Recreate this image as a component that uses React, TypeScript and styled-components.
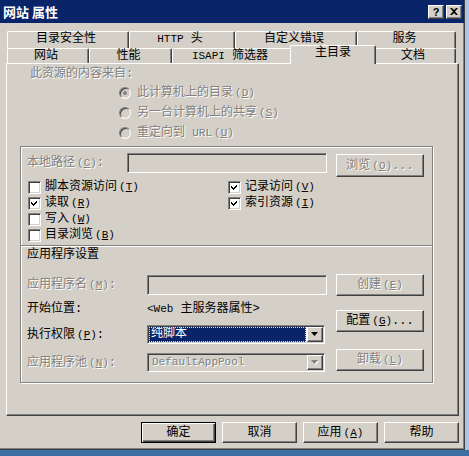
import React from 'react';
import styled, { createGlobalStyle, css } from 'styled-components';

const face = '#d4d0c8';

const GlobalStyle = createGlobalStyle`
  html, body {
    margin: 0;
    padding: 0;
    background: #3a6ea5;
  }
  body {
    font-family: "Liberation Mono", "Noto Sans CJK SC", monospace;
    font-size: 12px;
    line-height: 16px;
    color: #000;
  }
`;

const raised = css`
  border: 1px solid;
  border-color: #fff #404040 #404040 #fff;
  box-shadow: inset -1px -1px #808080, inset 1px 1px ${face};
`;

const sunken = css`
  border: 1px solid;
  border-color: #808080 #fff #fff #808080;
  box-shadow: inset 1px 1px #404040, inset -1px -1px ${face};
`;

const Desktop = styled.div`
  display: flex;
  align-items: flex-start;
  width: 469px;
  height: 456px;
  overflow: hidden;
`;

const Strip = styled.div`
  width: 4px;
  height: 450px;
  background: #a9c6ea;
`;

const Window = styled.div`
  width: 465px;
  height: 450px;
  box-sizing: border-box;
  background: ${face};
  border-right: 1px solid #404040;
  border-bottom: 1px solid #404040;
  box-shadow: inset -1px -1px #808080;
  display: flex;
  flex-direction: column;
`;

const TitleBar = styled.div`
  height: 23px;
  background: #0a246a;
  display: flex;
  align-items: center;
  padding: 0 2px 0 3px;
`;

const TitleText = styled.div`
  flex: 1;
  color: #fff;
  font-family: "Noto Sans CJK SC", sans-serif;
  font-weight: bold;
  font-size: 13px;
`;

const CapButtons = styled.div`
  display: flex;
  gap: 2px;
`;

const CapButton = styled.div`
  width: 16px;
  height: 14px;
  box-sizing: border-box;
  background: ${face};
  ${raised}
  display: flex;
  align-items: center;
  justify-content: center;
  font-family: "Liberation Sans", sans-serif;
  font-weight: bold;
  font-size: 11px;
  line-height: 12px;
`;

const Body = styled.div`
  padding: 8px 5px 0 6px;
  display: flex;
  flex-direction: column;
`;

const Tabs = styled.div`
  margin-left: 1px;
`;

const TabRow = styled.div<{ $h: number }>`
  display: flex;
  align-items: flex-end;
  height: ${p => p.$h}px;
`;

const Tab = styled.div<{ $w: number; $active?: boolean }>`
  width: ${p => p.$w}px;
  height: 100%;
  box-sizing: border-box;
  border-top: 1px solid #fff;
  border-left: 1px solid #fff;
  border-right: 1px solid #404040;
  box-shadow: inset -1px 0 #808080;
  border-radius: 2px 2px 0 0;
  background: ${face};
  text-align: center;
  padding-right: 4px;
  line-height: 15px;
  white-space: nowrap;
  ${p =>
    p.$active &&
    css`
      width: ${p.$w + 4}px;
      height: 19px;
      margin: 0 -2px -1px;
      padding-right: 0;
      position: relative;
      z-index: 2;
      line-height: 14px;
    `}
`;

const Panel = styled.div`
  position: relative;
  z-index: 1;
  height: 353px;
  box-sizing: border-box;
  border: 1px solid;
  border-color: #fff #404040 #404040 #fff;
  box-shadow: inset -1px -1px #808080;
  padding-top: 2px;
`;

const Dim = styled.span`
  color: #808080;
  text-shadow: 1px 1px 0 #fff;
`;

const Lat = styled.span`
  font-family: "Liberation Mono", monospace;
  font-size: 11px;
`;

const Key = styled.span`
  font-size: 11px;
  margin-left: 2px;
`;

const SourceLabel = styled.div`
  padding-left: 23px;
`;

const RadioGroup = styled.div`
  margin-top: 3px;
  padding-left: 112px;
  display: flex;
  flex-direction: column;
  gap: 4px;
`;

const RadioRow = styled.div`
  display: flex;
  align-items: center;
  height: 16px;
  gap: 6px;
`;

const RadioCircle = styled.div<{ $on?: boolean }>`
  width: 12px;
  height: 12px;
  box-sizing: border-box;
  border-radius: 50%;
  border: 1px solid;
  border-color: #808080 #fff #fff #808080;
  box-shadow: inset 1px 1px #404040;
  background: ${face};
  display: flex;
  align-items: center;
  justify-content: center;
  &::after {
    content: '';
    display: ${p => (p.$on ? 'block' : 'none')};
    width: 4px;
    height: 4px;
    border-radius: 50%;
    background: #808080;
  }
`;

const GroupBox = styled.div`
  margin: 5px 0 0 13px;
  width: 413px;
  height: 237px;
  box-sizing: border-box;
  border: 1px solid #808080;
  box-shadow: inset 1px 1px #fff, 1px 1px #fff;
`;

const PathRow = styled.div`
  display: flex;
  align-items: flex-start;
  padding: 6px 0 0 6px;
`;

const FieldLabel = styled.div<{ $w: number }>`
  width: ${p => p.$w}px;
  line-height: 20px;
  white-space: nowrap;
`;

const TextBox = styled.div<{ $w: number; $disabled?: boolean }>`
  width: ${p => p.$w}px;
  height: 20px;
  box-sizing: border-box;
  ${sunken}
  background: ${p => (p.$disabled ? face : '#fff')};
`;

const Button = styled.button<{ $w: number; $h: number; $default?: boolean }>`
  width: ${p => p.$w}px;
  height: ${p => p.$h}px;
  box-sizing: border-box;
  margin: 0;
  padding: 0;
  background: ${face};
  font: inherit;
  line-height: 16px;
  color: #000;
  display: flex;
  align-items: center;
  justify-content: center;
  white-space: nowrap;
  ${raised}
  ${p =>
    p.$default &&
    css`
      border-color: #000;
      box-shadow: inset 1px 1px #fff, inset -1px -1px #404040, inset -2px -2px #808080;
    `}
`;

const BrowseButton = styled(Button)`
  margin: 1px 0 0 9px;
`;

const CheckGrid = styled.div`
  display: grid;
  grid-template-columns: 200px 200px;
  grid-auto-rows: 16px;
  margin: 2px 0 0 7px;
`;

const CheckItem = styled.div`
  display: flex;
  align-items: center;
  gap: 4px;
`;

const CheckBox = styled.div`
  width: 13px;
  height: 13px;
  box-sizing: border-box;
  ${sunken}
  background: #fff;
  display: flex;
`;

const Separator = styled.div`
  margin-top: 2px;
  border-top: 1px solid #808080;
  border-bottom: 1px solid #fff;
`;

const SectionHead = styled.div`
  padding-left: 6px;
`;

const AppBody = styled.div`
  display: flex;
  margin-top: 11px;
  padding-left: 6px;
`;

const LeftCol = styled.div`
  width: 309px;
  padding-top: 1px;
  display: flex;
  flex-direction: column;
`;

const AppRow = styled.div<{ $h: number; $mt: number }>`
  display: flex;
  align-items: center;
  height: ${p => p.$h}px;
  margin-top: ${p => p.$mt}px;
  white-space: nowrap;
`;

const RowLabel = styled.div`
  width: 120px;
`;

const RightCol = styled.div`
  display: flex;
  flex-direction: column;
`;

const SideButton = styled(Button)<{ $mt: number }>`
  margin-top: ${p => p.$mt}px;
`;

const Combo = styled.div<{ $w: number; $disabled?: boolean }>`
  width: ${p => p.$w}px;
  height: 19px;
  box-sizing: border-box;
  ${sunken}
  padding: 1px;
  display: flex;
  background: ${p => (p.$disabled ? face : '#fff')};
`;

const ComboField = styled.div`
  flex: 1;
  display: flex;
  padding-right: 1px;
  line-height: 15px;
  overflow: hidden;
`;

const Selection = styled.div`
  flex: 1;
  background: #0a246a;
  color: #fff;
  outline: 1px dotted #e8e890;
  outline-offset: -1px;
  padding-left: 2px;
`;

const ComboText = styled.div`
  padding-left: 3px;
`;

const ArrowButton = styled.div`
  width: 16px;
  height: 15px;
  box-sizing: border-box;
  ${raised}
  background: ${face};
  display: flex;
  align-items: center;
  justify-content: center;
`;

const Footer = styled.div`
  display: flex;
  justify-content: flex-end;
  gap: 6px;
  margin-top: 6px;
`;

const Mn = ({ c }: { c: string }) => (
  <Key>
    (<u>{c}</u>)
  </Key>
);

const Check = () => (
  <svg width="11" height="11" viewBox="0 0 11 11">
    <polygon points="2,4 4,6 8,2 8,4 4,8 2,6" fill="#000" shapeRendering="crispEdges" />
  </svg>
);

const Arrow = ({ disabled }: { disabled?: boolean }) => (
  <svg width="8" height="5" viewBox="0 0 8 5">
    {disabled && <polygon points="1,1 8,1 4.5,5" fill="#fff" />}
    <polygon points="0,0 7,0 3.5,4" fill={disabled ? '#808080' : '#000'} />
  </svg>
);

const checks: { label: string; key: string; on: boolean }[] = [
  { label: '脚本资源访问', key: 'T', on: false },
  { label: '记录访问', key: 'V', on: true },
  { label: '读取', key: 'R', on: true },
  { label: '索引资源', key: 'I', on: true },
  { label: '写入', key: 'W', on: false },
  { label: '', key: '', on: false },
  { label: '目录浏览', key: 'B', on: false },
];

const App = () => {
  return (
    <Desktop>
      <GlobalStyle />
      <Window>
        <TitleBar>
          <TitleText>网站 属性</TitleText>
          <CapButtons>
            <CapButton>?</CapButton>
            <CapButton>
              <svg width="8" height="7" viewBox="0 0 8 7">
                <path d="M0 0h2l2 2 2-2h2L5 3.5 8 7H6L4 5 2 7H0l3-3.5z" fill="#000" />
              </svg>
            </CapButton>
          </CapButtons>
        </TitleBar>

        <Body>
          <Tabs>
            <TabRow $h={17}>
              <Tab $w={122}>目录安全性</Tab>
              <Tab $w={106}>
                <Lat>HTTP</Lat> 头
              </Tab>
              <Tab $w={122}>自定义错误</Tab>
              <Tab $w={99}>服务</Tab>
            </TabRow>
            <TabRow $h={15}>
              <Tab $w={82}>网站</Tab>
              <Tab $w={83}>性能</Tab>
              <Tab $w={120}>
                <Lat>ISAPI</Lat> 筛选器
              </Tab>
              <Tab $w={82} $active>
                主目录
              </Tab>
              <Tab $w={82}>文档</Tab>
            </TabRow>
          </Tabs>

          <Panel>
            <SourceLabel>
              <Dim>此资源的内容来自:</Dim>
            </SourceLabel>
            <RadioGroup>
              <RadioRow>
                <RadioCircle $on />
                <Dim>
                  此计算机上的目录<Mn c="D" />
                </Dim>
              </RadioRow>
              <RadioRow>
                <RadioCircle />
                <Dim>
                  另一台计算机上的共享<Mn c="S" />
                </Dim>
              </RadioRow>
              <RadioRow>
                <RadioCircle />
                <Dim>
                  重定向到 <Lat>URL</Lat>
                  <Mn c="U" />
                </Dim>
              </RadioRow>
            </RadioGroup>

            <GroupBox>
              <PathRow>
                <FieldLabel $w={100}>
                  <Dim>
                    本地路径<Mn c="C" />:
                  </Dim>
                </FieldLabel>
                <TextBox $w={200} $disabled />
                <BrowseButton $w={88} $h={23}>
                  <Dim>
                    浏览<Mn c="O" />...
                  </Dim>
                </BrowseButton>
              </PathRow>

              <CheckGrid>
                {checks.map((c, i) =>
                  c.label ? (
                    <CheckItem key={i}>
                      <CheckBox>{c.on && <Check />}</CheckBox>
                      <span>
                        {c.label}
                        <Mn c={c.key} />
                      </span>
                    </CheckItem>
                  ) : (
                    <div key={i} />
                  )
                )}
              </CheckGrid>

              <Separator />
              <SectionHead>应用程序设置</SectionHead>

              <AppBody>
                <LeftCol>
                  <AppRow $h={20} $mt={0}>
                    <RowLabel>
                      <Dim>
                        应用程序名<Mn c="M" />:
                      </Dim>
                    </RowLabel>
                    <TextBox $w={180} $disabled />
                  </AppRow>
                  <AppRow $h={16} $mt={6}>
                    <RowLabel>开始位置:</RowLabel>
                    <span>
                      <Lat>&lt;Web</Lat> 主服务器属性&gt;
                    </span>
                  </AppRow>
                  <AppRow $h={19} $mt={8}>
                    <RowLabel>
                      执行权限<Mn c="P" />:
                    </RowLabel>
                    <Combo $w={178}>
                      <ComboField>
                        <Selection>纯脚本</Selection>
                      </ComboField>
                      <ArrowButton>
                        <Arrow />
                      </ArrowButton>
                    </Combo>
                  </AppRow>
                  <AppRow $h={19} $mt={9}>
                    <RowLabel>
                      <Dim>
                        应用程序池<Mn c="N" />:
                      </Dim>
                    </RowLabel>
                    <Combo $w={178} $disabled>
                      <ComboField>
                        <ComboText>
                          <Dim>
                            <Lat>DefaultAppPool</Lat>
                          </Dim>
                        </ComboText>
                      </ComboField>
                      <ArrowButton>
                        <Arrow disabled />
                      </ArrowButton>
                    </Combo>
                  </AppRow>
                </LeftCol>
                <RightCol>
                  <SideButton $w={88} $h={22} $mt={0}>
                    <Dim>
                      创建<Mn c="E" />
                    </Dim>
                  </SideButton>
                  <SideButton $w={88} $h={22} $mt={14}>
                    配置<Mn c="G" />...
                  </SideButton>
                  <SideButton $w={88} $h={22} $mt={17}>
                    <Dim>
                      卸载<Mn c="L" />
                    </Dim>
                  </SideButton>
                </RightCol>
              </AppBody>
            </GroupBox>
          </Panel>

          <Footer>
            <Button $w={75} $h={21} $default>
              确定
            </Button>
            <Button $w={75} $h={21}>
              取消
            </Button>
            <Button $w={75} $h={21}>
              应用<Mn c="A" />
            </Button>
            <Button $w={75} $h={21}>
              帮助
            </Button>
          </Footer>
        </Body>
      </Window>
      <Strip />
    </Desktop>
  );
};

export default App;
